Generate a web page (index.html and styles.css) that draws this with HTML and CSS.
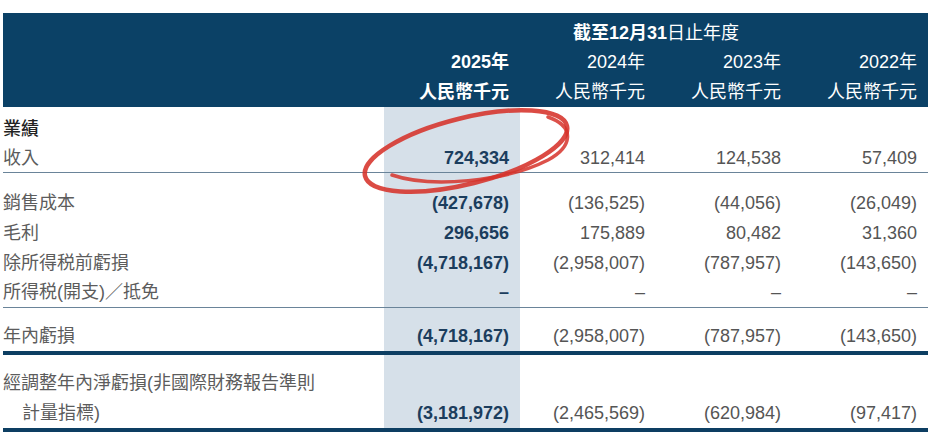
FILE: index.html
```html
<!DOCTYPE html>
<html lang="zh-Hant">
<head>
<meta charset="utf-8">
<link rel="stylesheet" href="styles.css">
</head>
<body>
<div class="page">
  <table class="fin">
    <colgroup>
      <col class="c-label"><col class="c-yr"><col class="c-yr"><col class="c-yr"><col class="c-yr">
    </colgroup>
    <thead>
      <tr class="h1">
        <th class="lbl"></th>
        <th colspan="4" class="span"><b>截至12月31</b>日止年度</th>
      </tr>
      <tr class="h2">
        <th class="lbl"></th>
        <th class="cur">2025年</th>
        <th>2024年</th>
        <th>2023年</th>
        <th>2022年</th>
      </tr>
      <tr class="h3">
        <th class="lbl"></th>
        <th class="cur">人民幣千元</th>
        <th>人民幣千元</th>
        <th>人民幣千元</th>
        <th>人民幣千元</th>
      </tr>
    </thead>
    <tbody>
      <tr class="r-first">
        <td class="lbl strong">業績</td>
        <td class="cur"></td><td></td><td></td><td></td>
      </tr>
      <tr class="r-thin">
        <td class="lbl">收入</td>
        <td class="cur">724,334</td><td>312,414</td><td>124,538</td><td>57,409</td>
      </tr>
      <tr class="r-gap15">
        <td class="lbl">銷售成本</td>
        <td class="cur">(427,678)</td><td>(136,525)</td><td>(44,056)</td><td>(26,049)</td>
      </tr>
      <tr class="r-norm">
        <td class="lbl">毛利</td>
        <td class="cur">296,656</td><td>175,889</td><td>80,482</td><td>31,360</td>
      </tr>
      <tr class="r-norm">
        <td class="lbl">除所得税前虧損</td>
        <td class="cur">(4,718,167)</td><td>(2,958,007)</td><td>(787,957)</td><td>(143,650)</td>
      </tr>
      <tr class="r-thin2">
        <td class="lbl">所得税(開支)／抵免</td>
        <td class="cur">–</td><td>–</td><td>–</td><td>–</td>
      </tr>
      <tr class="r-thick">
        <td class="lbl">年內虧損</td>
        <td class="cur">(4,718,167)</td><td>(2,958,007)</td><td>(787,957)</td><td>(143,650)</td>
      </tr>
      <tr class="r-gap13">
        <td class="lbl">經調整年內淨虧損(非國際財務報告準則</td>
        <td class="cur"></td><td></td><td></td><td></td>
      </tr>
      <tr class="r-last">
        <td class="lbl indent">計量指標)</td>
        <td class="cur">(3,181,972)</td><td>(2,465,569)</td><td>(620,984)</td><td>(97,417)</td>
      </tr>
    </tbody>
  </table>
  <svg class="mark" width="940" height="439" viewBox="0 0 940 439" aria-hidden="true">
    <ellipse cx="466" cy="151" rx="104" ry="33" transform="rotate(-14 466 151)" fill="none" stroke="#d6322a" stroke-width="4.5" opacity="0.88"/>
    <path d="M392 175 C 430 188, 505 182, 548 160 C 572 147, 576 127, 548 117" fill="none" stroke="#d6322a" stroke-width="3.5" stroke-linecap="round" opacity="0.85"/>
  </svg>
</div>
</body>
</html>
```

FILE: styles.css
```css
html, body {
  margin: 0;
  background: #ffffff;
}

.page {
  position: relative;
  width: 940px;
  height: 439px;
  padding: 13px 0 0 3px;
  box-sizing: border-box;
  overflow: hidden;
  font-family: "Liberation Sans", "Noto Sans CJK TC", sans-serif;
}

.fin {
  border-collapse: separate;
  border-spacing: 0;
  table-layout: fixed;
  width: 925px;
  font-size: 18px;
}

.c-label { width: 381px; }
.c-yr { width: 136px; }

.fin th {
  background: #0b4166;
  color: #ffffff;
  font-weight: normal;
  text-align: right;
  padding: 0 11px 0 0;
  white-space: nowrap;
}

.fin th.cur {
  font-weight: bold;
}

.fin th.span {
  text-align: center;
  padding-right: 0;
}

.fin th.span b {
  font-weight: bold;
}

.h1 th { padding-top: 6px; line-height: 29px; }
.h2 th { line-height: 29px; }
.h3 th { line-height: 30px; }

.fin td {
  padding: 0 11px 0 0;
  text-align: right;
  color: #555555;
  white-space: nowrap;
  line-height: 30px;
}

.fin td.lbl {
  text-align: left;
  color: #5c5c5c;
  padding-right: 0;
}

.fin td.strong {
  color: #222222;
  font-weight: 500;
}

.fin td.indent {
  padding-left: 19px;
}

.fin td.cur {
  background: #d6e0e9;
  color: #1b3d5d;
  font-weight: bold;
}

.r-first td { padding-top: 8px; line-height: 29px; }
.r-thin td { line-height: 28px; border-bottom: 1px solid #6a8499; }
.r-gap15 td { padding-top: 15px; }
.r-thin2 td { line-height: 29px; border-bottom: 1px solid #6a8499; }
.r-thick td { padding-top: 13px; border-bottom: 4px solid #0d3e62; }
.r-gap13 td { padding-top: 13px; }
.r-last td { border-bottom: 4px solid #0d3e62; }

.mark {
  position: absolute;
  left: 0;
  top: 0;
  pointer-events: none;
}
```
